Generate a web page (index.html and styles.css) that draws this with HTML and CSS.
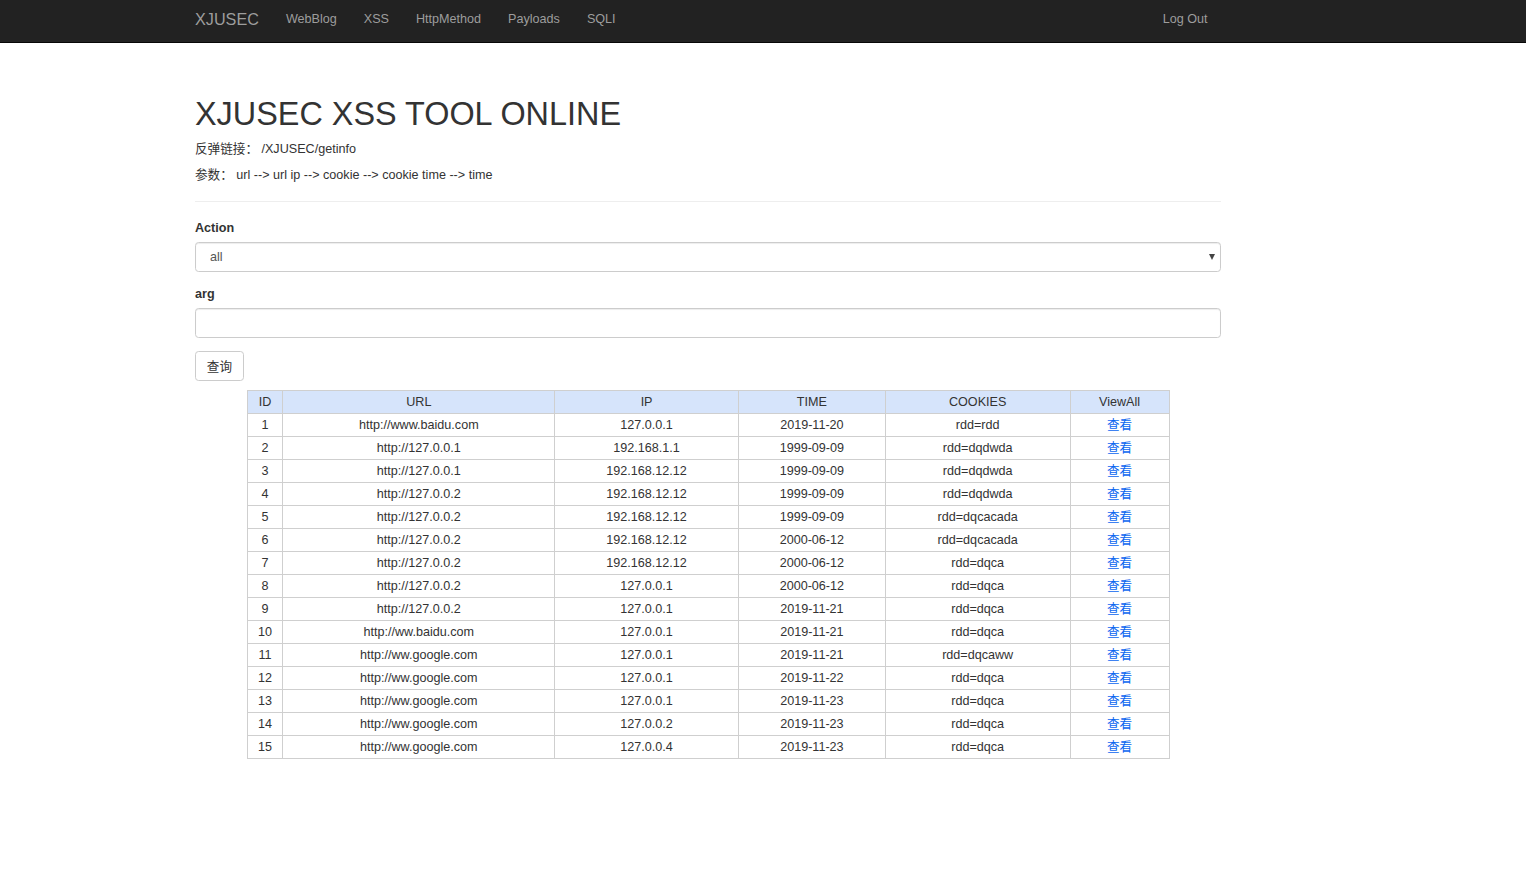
FILE: index.html
```html
<!DOCTYPE html>
<html lang="zh">
<head>
<meta charset="utf-8">
<title>XJUSEC XSS TOOL ONLINE</title>
<link rel="stylesheet" href="styles.css">
</head>
<body>
<nav class="navbar">
  <div class="nav-inner">
    <a class="brand" href="#">XJUSEC</a>
    <ul class="nav-links">
      <li><a href="#">WebBlog</a></li>
      <li><a href="#">XSS</a></li>
      <li><a href="#">HttpMethod</a></li>
      <li><a href="#">Payloads</a></li>
      <li><a href="#">SQLI</a></li>
    </ul>
    <a class="logout" href="#">Log Out</a>
  </div>
</nav>
<main class="container">
  <h1 class="title">XJUSEC XSS TOOL ONLINE</h1>
  <p class="info">反弹链接：&nbsp;/XJUSEC/getinfo</p>
  <p class="info">参数：&nbsp;url --&gt; url ip --&gt; cookie --&gt; cookie time --&gt; time</p>
  <hr class="sep">
  <form class="query">
    <div class="form-group">
      <label class="lbl">Action</label>
      <div class="select-wrap">
        <select class="field select"><option>all</option></select>
      </div>
    </div>
    <div class="form-group">
      <label class="lbl">arg</label>
      <input class="field" type="text">
    </div>
    <button class="btn" type="button">查询</button>
  </form>
  <table class="data">
    <colgroup>
      <col class="c-id"><col class="c-url"><col class="c-ip"><col class="c-time"><col class="c-cookie"><col class="c-view">
    </colgroup>
    <thead>
      <tr><th>ID</th><th>URL</th><th>IP</th><th>TIME</th><th>COOKIES</th><th>ViewAll</th></tr>
    </thead>
    <tbody>
      <tr><td>1</td><td>http://www.baidu.com</td><td>127.0.0.1</td><td>2019-11-20</td><td>rdd=rdd</td><td><a href="#">查看</a></td></tr>
      <tr><td>2</td><td>http://127.0.0.1</td><td>192.168.1.1</td><td>1999-09-09</td><td>rdd=dqdwda</td><td><a href="#">查看</a></td></tr>
      <tr><td>3</td><td>http://127.0.0.1</td><td>192.168.12.12</td><td>1999-09-09</td><td>rdd=dqdwda</td><td><a href="#">查看</a></td></tr>
      <tr><td>4</td><td>http://127.0.0.2</td><td>192.168.12.12</td><td>1999-09-09</td><td>rdd=dqdwda</td><td><a href="#">查看</a></td></tr>
      <tr><td>5</td><td>http://127.0.0.2</td><td>192.168.12.12</td><td>1999-09-09</td><td>rdd=dqcacada</td><td><a href="#">查看</a></td></tr>
      <tr><td>6</td><td>http://127.0.0.2</td><td>192.168.12.12</td><td>2000-06-12</td><td>rdd=dqcacada</td><td><a href="#">查看</a></td></tr>
      <tr><td>7</td><td>http://127.0.0.2</td><td>192.168.12.12</td><td>2000-06-12</td><td>rdd=dqca</td><td><a href="#">查看</a></td></tr>
      <tr><td>8</td><td>http://127.0.0.2</td><td>127.0.0.1</td><td>2000-06-12</td><td>rdd=dqca</td><td><a href="#">查看</a></td></tr>
      <tr><td>9</td><td>http://127.0.0.2</td><td>127.0.0.1</td><td>2019-11-21</td><td>rdd=dqca</td><td><a href="#">查看</a></td></tr>
      <tr><td>10</td><td>http://ww.baidu.com</td><td>127.0.0.1</td><td>2019-11-21</td><td>rdd=dqca</td><td><a href="#">查看</a></td></tr>
      <tr><td>11</td><td>http://ww.google.com</td><td>127.0.0.1</td><td>2019-11-21</td><td>rdd=dqcaww</td><td><a href="#">查看</a></td></tr>
      <tr><td>12</td><td>http://ww.google.com</td><td>127.0.0.1</td><td>2019-11-22</td><td>rdd=dqca</td><td><a href="#">查看</a></td></tr>
      <tr><td>13</td><td>http://ww.google.com</td><td>127.0.0.1</td><td>2019-11-23</td><td>rdd=dqca</td><td><a href="#">查看</a></td></tr>
      <tr><td>14</td><td>http://ww.google.com</td><td>127.0.0.2</td><td>2019-11-23</td><td>rdd=dqca</td><td><a href="#">查看</a></td></tr>
      <tr><td>15</td><td>http://ww.google.com</td><td>127.0.0.4</td><td>2019-11-23</td><td>rdd=dqca</td><td><a href="#">查看</a></td></tr>
    </tbody>
  </table>
</main>
</body>
</html>
```
FILE: styles.css
```css
* { box-sizing: border-box; }

html, body {
  margin: 0;
  padding: 0;
  background: #fff;
}

body {
  font-family: "Liberation Sans", Arial, "Noto Sans CJK SC", sans-serif;
  font-size: 12.6px;
  line-height: 18px;
  color: #333;
}

a { text-decoration: none; }

/* Navbar */
.navbar {
  height: 43px;
  background: #222;
  border-bottom: 1px solid #080808;
}

.nav-inner {
  width: 1026px;
  margin-left: 195px;
  height: 42px;
  display: flex;
  align-items: center;
}

.brand {
  color: #9d9d9d;
  font-size: 16.2px;
  line-height: 20px;
  padding-right: 13.5px;
  margin-top: -5px;
}

.nav-links {
  list-style: none;
  margin: 0;
  padding: 0;
  display: flex;
  flex: 1;
}

.nav-links a,
.logout {
  display: block;
  color: #9d9d9d;
  padding: 0 13.5px;
  margin-top: -5px;
}

.logout { padding-right: 13.5px; }

/* Main content */
.container {
  width: 1026px;
  margin-left: 195px;
}

.title {
  font-size: 32.4px;
  line-height: 35.6px;
  font-weight: 500;
  margin: 54px 0 7px;
  color: #333;
}

.info {
  margin: 0 0 8px;
}

.sep {
  border: 0;
  border-top: 1px solid #eee;
  margin: 17px 0 17px;
}

.form-group {
  margin-bottom: 12.5px;
}

.lbl {
  display: block;
  font-weight: 700;
  margin-bottom: 5.5px;
}

.field {
  display: block;
  width: 100%;
  height: 30px;
  padding: 5px 14px;
  font-family: inherit;
  font-size: 12.6px;
  color: #555;
  background: #fff;
  border: 1px solid #ccc;
  border-radius: 3.6px;
  box-shadow: inset 0 1px 1px rgba(0,0,0,.075);
  outline: none;
}

.select-wrap { position: relative; }

.select {
  -webkit-appearance: none;
  appearance: none;
}

.select-wrap::after {
  content: "";
  position: absolute;
  right: 6px;
  top: 12px;
  border-left: 3px solid transparent;
  border-right: 3px solid transparent;
  border-top: 6px solid #444;
}

.btn {
  display: inline-block;
  height: 30px;
  padding: 0 10.8px;
  font-family: "Liberation Sans", Arial, "Noto Sans CJK SC", sans-serif;
  font-size: 12.6px;
  color: #333;
  background: #fff;
  border: 1px solid #ccc;
  border-radius: 3.6px;
}

/* Table */
.data {
  width: 923px;
  margin: 9px auto 0;
  border-collapse: collapse;
  text-align: center;
}

.c-id { width: 36px; }
.c-url { width: 272px; }
.c-ip { width: 184px; }
.c-time { width: 147px; }
.c-cookie { width: 185px; }
.c-view { width: 99px; }

.data th,
.data td {
  border: 1px solid #cfcfcf;
  padding: 2px 0;
  line-height: 18px;
  font-weight: 400;
  color: #333;
}

.data th {
  background: #d6e4fb;
}

.data td a {
  color: #0a66f0;
}
```
